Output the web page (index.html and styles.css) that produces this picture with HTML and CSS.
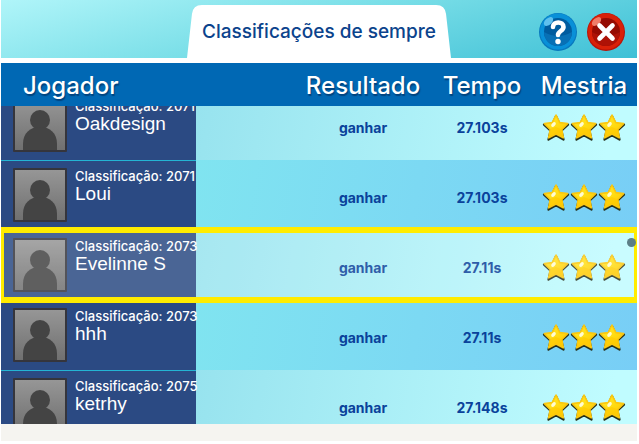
FILE: index.html
```html
<!DOCTYPE html>
<html lang="pt">
<head>
<meta charset="utf-8">
<title>Classificações de sempre</title>
<link rel="stylesheet" href="styles.css">
</head>
<body>
<svg class="defs" aria-hidden="true">
  <defs>
    <linearGradient id="photo" x1="0" y1="0" x2="0" y2="1"><stop offset="0" stop-color="#969696"/><stop offset="1" stop-color="#707070"/></linearGradient>
    <linearGradient id="gold" x1="0" y1="0" x2="1" y2="1"><stop offset="0" stop-color="#ffea30"/><stop offset="0.5" stop-color="#ffdc14"/><stop offset="1" stop-color="#ffc400"/></linearGradient>
    <symbol id="avatar" viewBox="0 0 54 54">
      <rect width="54" height="54" rx="1" fill="#35353c"/>
      <rect x="2" y="2" width="50" height="50" fill="url(#photo)"/>
      <circle cx="27" cy="22" r="10" fill="#444"/>
      <path d="M10 52V46C10 35 17 29 27 29S44 35 44 46V52Z" fill="#444"/>
    </symbol>
    <symbol id="star" viewBox="0 0 28 28">
      <path d="M14 2.5L17.4 10.2L26 11L19.4 17L21.5 26L14 21.7L6.5 26L8.6 17L2 11L10.6 10.2Z" transform="translate(0 .6)" fill="#26301c" stroke="#26301c" stroke-width="2.2" stroke-linejoin="round"/>
      <path d="M14 2L17.8 9.6L25.6 10.6L19.8 16.5L21.3 24.8L14 21L6.7 24.8L8.2 16.5L2.4 10.6L10.200 9.600Z" fill="url(#gold)" stroke="#fbc810" stroke-width="1.600" stroke-linejoin="round"/>
      <path d="M9 15.500L14 14L20 16.500L21 24.500L14 20.500L7 24.500L9 16.500Z" fill="#ffc800" opacity=".6"/>
      <ellipse cx="11.500" cy="11.500" rx="2.800" ry="1.700" transform="rotate(-45 11.500 11.500)" fill="#fffbd2"/>
    </symbol>
  </defs>
</svg>
<main class="board">
  <header class="top">
    <div class="tab">
      <svg class="tab-shape" viewBox="0 0 266 53" preserveAspectRatio="none" aria-hidden="true"><path d="M0 53L5 9Q6 0 15 0H251Q260 0 261 9L266 53Z" fill="#fff"/></svg>
      <h1>Classificações de sempre</h1>
    </div>
    <div class="actions">
      <button type="button" aria-label="Ajuda">
        <svg viewBox="0 0 38 38"><circle cx="19" cy="19" r="19" fill="#0878be"/><circle cx="19" cy="18.5" r="18" fill="#0990d8"/><circle cx="19" cy="19" r="14" fill="#005c9f"/><path d="M5 19a14 14 0 0 0 28 0Q19 27 5 19Z" fill="#0870b5"/><ellipse cx="9.5" cy="8.5" rx="5.5" ry="3.3" transform="rotate(-42 9.5 8.5)" fill="#5fc0ee"/><path d="M14 14C14 8 24.5 8 24.5 14C24.5 18 19 18 19 22" fill="none" stroke="#fff" stroke-width="4.6" stroke-linecap="round"/><circle cx="19" cy="28.5" r="2.7" fill="#fff"/></svg>
      </button>
      <button type="button" aria-label="Fechar">
        <svg viewBox="0 0 38 38"><circle cx="19" cy="19" r="19" fill="#b91409"/><circle cx="19" cy="18.5" r="18" fill="#d92108"/><circle cx="19" cy="19" r="14" fill="#960b02"/><path d="M5 19a14 14 0 0 0 28 0Q19 27 5 19Z" fill="#ae1206"/><ellipse cx="9.5" cy="8.5" rx="5.5" ry="3.3" transform="rotate(-42 9.5 8.5)" fill="#ef7c68"/><path d="M12.5 12.5L25.5 25.5M25.5 12.5L12.5 25.5" stroke="#fff" stroke-width="4.6" stroke-linecap="round"/></svg>
      </button>
    </div>
  </header>
  <table class="ranking">
    <thead>
      <tr><th class="name-head">Jogador</th><th class="result">Resultado</th><th>Tempo</th><th class="mastery">Mestria</th></tr>
    </thead>
    <tbody>
      <tr><td class="player"><svg class="avatar"><use href="#avatar"/></svg><div><p class="rank">Classificação: 2071</p><p class="name">Oakdesign</p></div></td><td class="result">ganhar</td><td>27.103s</td><td class="mastery"><svg class="star"><use href="#star"/></svg><svg class="star"><use href="#star"/></svg><svg class="star"><use href="#star"/></svg></td></tr>
      <tr><td class="player"><svg class="avatar"><use href="#avatar"/></svg><div><p class="rank">Classificação: 2071</p><p class="name">Loui</p></div></td><td class="result">ganhar</td><td>27.103s</td><td class="mastery"><svg class="star"><use href="#star"/></svg><svg class="star"><use href="#star"/></svg><svg class="star"><use href="#star"/></svg></td></tr>
      <tr class="current"><td class="player"><svg class="avatar"><use href="#avatar"/></svg><div><p class="rank">Classificação: 2073</p><p class="name">Evelinne S</p></div></td><td class="result">ganhar</td><td>27.11s</td><td class="mastery"><svg class="star"><use href="#star"/></svg><svg class="star"><use href="#star"/></svg><svg class="star"><use href="#star"/></svg><span class="thumb"></span></td></tr>
      <tr><td class="player"><svg class="avatar"><use href="#avatar"/></svg><div><p class="rank">Classificação: 2073</p><p class="name">hhh</p></div></td><td class="result">ganhar</td><td>27.11s</td><td class="mastery"><svg class="star"><use href="#star"/></svg><svg class="star"><use href="#star"/></svg><svg class="star"><use href="#star"/></svg></td></tr>
      <tr><td class="player"><svg class="avatar"><use href="#avatar"/></svg><div><p class="rank">Classificação: 2075</p><p class="name">ketrhy</p></div></td><td class="result">ganhar</td><td>27.148s</td><td class="mastery"><svg class="star"><use href="#star"/></svg><svg class="star"><use href="#star"/></svg><svg class="star"><use href="#star"/></svg></td></tr>
    </tbody>
  </table>
  <footer></footer>
</main>
</body>
</html>
```
FILE: styles.css
```css
* { box-sizing: border-box; }
body { margin: 0; background: #fff; font-family: Inter, "Liberation Sans", sans-serif; }
h1, p { margin: 0; }
.defs { position: absolute; width: 0; height: 0; }

.board { display: flex; flex-direction: column; height: 100vh; padding: 0 2px 3px 1px; }

.top {
  display: grid;
  grid-template-columns: 1fr 264px 1fr;
  flex: none;
  height: 58px;
  padding-top: 5px;
  background: linear-gradient(165deg, #b0f5f9 0%, #7bdfe8 45%, #3fc0d6 100%);
}
.tab { grid-column: 2; position: relative; display: flex; align-items: center; justify-content: center; }
.tab-shape { position: absolute; inset: 0; width: 100%; height: 100%; }
h1 { position: relative; color: #0b438c; font-size: 19px; font-weight: 500; white-space: nowrap; }
.actions { display: flex; justify-content: flex-end; align-items: center; gap: 10px; padding-right: 12px; }
.actions button { width: 38px; height: 38px; padding: 0; border: 0; background: none; }
.actions svg { display: block; width: 38px; height: 38px; }

.ranking { display: flex; flex-direction: column; flex: 1; min-height: 0; margin-top: 5px; }
thead { display: block; flex: none; background: #0068b4; }
tr { display: grid; grid-template-columns: 195px 1fr 114px 98px; }
th, td { display: flex; align-items: center; justify-content: center; padding: 0; }
th {
  height: 43px;
  padding-top: 2px;
  color: #fff;
  font-size: 24px;
  font-weight: 500;
  text-shadow: 1px 2px 1px #00447f;
}
.name-head { justify-content: flex-start; padding-left: 22px; }
.result { padding-left: 105px; }
.mastery { padding-right: 8px; }

tbody { display: block; flex: 1; min-height: 0; overflow: hidden; }
tbody tr { position: relative; height: 70px; background: linear-gradient(100deg, #94e1ed 25%, #c0fcff 95%); }
tbody tr:first-child { margin-top: -16px; }
tbody tr:nth-child(even) { background: linear-gradient(100deg, #80e4f0 30%, #78cef6 100%); }
td { padding-top: 4px; color: #0a429b; font-size: 14px; font-weight: 700; }
.player {
  align-items: flex-start;
  justify-content: flex-start;
  gap: 8px;
  padding: 7px 0 0 12px;
  border-top: 1px solid #24b5d4;
  background: #2b4a83;
  color: #fff;
  white-space: nowrap;
}
.avatar { flex: none; width: 54px; height: 54px; }
.rank { font-size: 13px; font-weight: 500; line-height: 17px; }
.name { font-family: "Liberation Sans", sans-serif; font-size: 19px; font-weight: 400; line-height: 18px; }
.star { width: 28px; height: 28px; flex: none; }

.current { z-index: 1; }
.current::after {
  content: "";
  position: absolute;
  inset: -3px 0;
  border: solid #ffec00;
  border-width: 6px 3px;
  background: rgb(255 255 255 / 15%);
  background-clip: padding-box;
}
.thumb { position: absolute; z-index: 1; top: 8px; right: 1px; width: 9px; height: 9px; border-radius: 50%; background: #5c7f87; }

footer { flex: none; height: 17px; background: #f5f4f0; }
```
